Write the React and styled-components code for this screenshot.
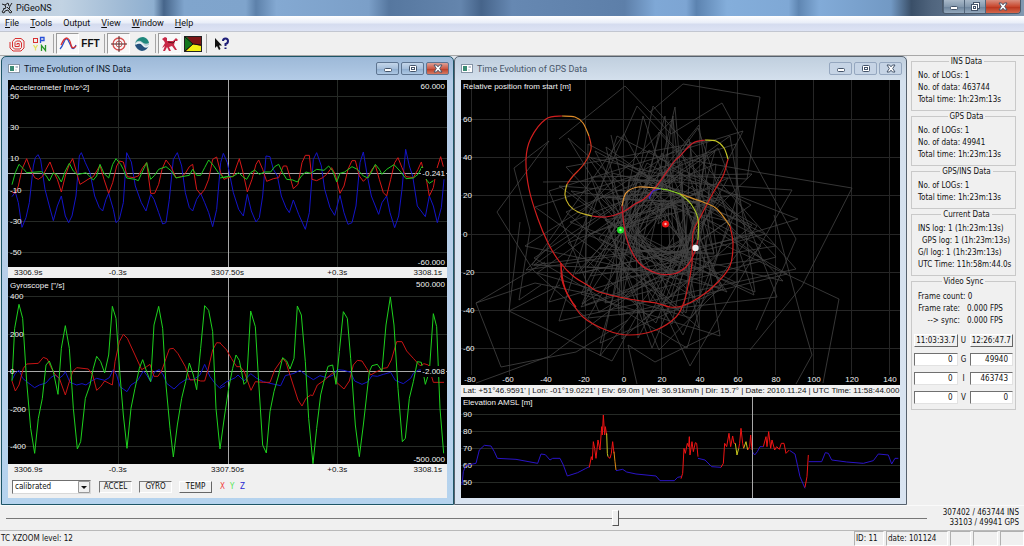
import React from "react";
import styled, { createGlobalStyle } from "styled-components";

const GlobalStyle = createGlobalStyle`
  * {
    box-sizing: border-box;
  }

  body {
    margin: 0;
    background: #f0f0f0;
    color: #111;
    font: 8px/12px "DejaVu Sans Condensed", "DejaVu Sans", sans-serif;
  }

  button, input, select {
    font: inherit;
    color: inherit;
    margin: 0;
  }
`;

const uiFont = `Roboto, "Open Sans", sans-serif`;

const Page = styled.div`
  display: flex;
  flex-direction: column;
  min-height: 100vh;
`;

const TitleBar = styled.header`
  display: flex;
  align-items: center;
  height: 16px;
  padding-left: 1px;
  font: 9px/16px ${uiFont};
  background: linear-gradient(
    90deg,
    #bccbd9 0%,
    #c2d3e3 6%,
    #9fbad5 12%,
    #8eafd0 15%,
    #46658a 16%,
    #80a5cd 18%,
    #7fa4cc 24%,
    #5d81aa 25%,
    #84a9d2 27%,
    #7b9fc8 36%,
    #56779f 38%,
    #6485ad 45%,
    #46648a 47%,
    #6688b2 50%,
    #5d7fa9 61%,
    #7fa8d6 64%,
    #7da5d3 67%,
    #5c83b0 68%,
    #84aedb 71%,
    #7fa8d5 77%,
    #5f86b2 78%,
    #82abd8 80%,
    #7299c4 87%,
    #3a4f68 89%,
    #50657e 91%,
    #8299b1 100%
  );
`;

const AppTitle = styled.h1`
  flex: 1;
  margin: 0 0 0 3px;
  font: inherit;
`;

const CaptionGroup = styled.div`
  display: flex;
  align-self: flex-start;
  margin-right: 3px;
  border: 1px solid #4b5a6b;
  border-top: 0;
  border-radius: 0 0 4px 4px;
  overflow: hidden;
`;

const CaptionButton = styled.button`
  display: flex;
  align-items: center;
  justify-content: center;
  width: ${({ $close }) => ($close ? 35 : 21)}px;
  height: 13px;
  padding: 0;
  border: 0;
  border-left: 1px solid #52657a;
  background: ${({ $close }) =>
    $close
      ? "linear-gradient(#d98f80, #c8482f 50%, #b8331c 52%, #d4674b)"
      : "linear-gradient(#a9b9c9, #8499ae 50%, #6c839b 52%, #93a8bc)"};
`;

const MenuBar = styled.nav`
  display: flex;
  gap: 11px;
  height: 16px;
  padding: 0 5px;
  font: 9px/15px ${uiFont};
  background: linear-gradient(#fff, #e9eef8 45%, #d5dcef 55%, #dde3f4);
  border-bottom: 1px solid #c2c6d0;
`;

const MenuLink = styled.a`
  color: #111;
  text-decoration: none;
`;

const Toolbar = styled.div`
  display: flex;
  align-items: center;
  height: 24px;
  padding: 0 5px;
  border-bottom: 1px solid #a8a8a8;
`;

const ToolButton = styled.button`
  display: flex;
  align-items: center;
  justify-content: center;
  width: 23px;
  height: 21px;
  padding: 0;
  font: bold 10px/16px "Liberation Sans", sans-serif;
  border: 1px solid;
  border-color: ${({ $on }) => ($on ? "#9b9b9b #fff #fff #9b9b9b" : "transparent")};
  background: ${({ $on }) => ($on ? "#f8f8f8" : "none")};
`;

const Separator = styled.span`
  width: 1px;
  height: 19px;
  margin: 0 2px;
  background: #a5a5a5;
`;

const Workspace = styled.main`
  display: flex;
  padding-left: 1px;
  background: #dfe5ec;
`;

const Frame = styled.section`
  flex: 1;
  min-width: 0;
  padding: 0 6px 6px;
  border: 1px solid ${({ $active }) => ($active ? "#1d5566" : "#56616d")};
  border-radius: 5px 5px 0 0;
  background: ${({ $active }) =>
    $active
      ? "linear-gradient(#9db9d8, #b4cce7 24px, #b7cfe9 60%, #b5d3ee)"
      : "linear-gradient(#c0cfde, #d4e0ed 24px, #d9e4f1)"};
`;

const FrameHeader = styled.header`
  display: flex;
  align-items: center;
  gap: 4px;
  height: 23px;
`;

const FrameTitle = styled.h2`
  flex: 1;
  margin: 0;
  font: 9px/16px ${uiFont};
  color: ${({ $active }) => ($active ? "#0c1a2b" : "#48576a")};
`;

const FrameButton = styled.button`
  display: flex;
  align-items: center;
  justify-content: center;
  width: 23px;
  height: 13px;
  margin-right: -2px;
  padding: 0;
  border: 1px solid ${({ $tone }) => ($tone === "idle" ? "#95a7bf" : "#5e7591")};
  border-radius: 2px;
  background: ${({ $tone }) =>
    ({
      idle: "#c6d4e5",
      blue: "linear-gradient(#c4d6ea, #a6bfdb 50%, #8dacce 52%, #aec8e4)",
      red: "linear-gradient(#dda096, #cc5a46 50%, #b93a24 52%, #d57a64)",
    })[$tone]};
`;

const FrameBody = styled.div`
  background: #f0f0f0;
`;

const Plot = styled.svg`
  display: block;
  width: 100%;
  background: #000;
  font: 8px "Liberation Sans", sans-serif;
  fill: #f2f2f2;

  polyline,
  path {
    fill: none;
  }
`;

const TimeAxis = styled.div`
  display: grid;
  grid-template-columns: 1fr 2fr 2fr 2fr 1fr;
  height: 11px;
  padding: 0;
  font: 8px/11px "Liberation Sans", sans-serif;
  text-align: center;
  white-space: nowrap;

  span:first-child {
    padding-left: 6px;
    text-align: left;
  }

  span:last-child {
    padding-right: 5px;
    justify-self: end;
  }
`;

const FixInfo = styled.div`
  height: 12px;
  padding: 0 2px;
  font: 8px/12px "Liberation Sans", sans-serif;
  white-space: nowrap;
`;

const Controls = styled.div`
  display: flex;
  align-items: center;
  height: 23px;
  gap: 7px;
  padding-left: 4px;
`;

const SelectBox = styled.label`
  position: relative;
  width: 79px;
  margin-right: 1px;
`;

const Select = styled.select`
  display: block;
  appearance: none;
  width: 100%;
  height: 14px;
  padding: 0 2px;
  border: 1px solid;
  border-color: #6f6f6f #d8d8d8 #d8d8d8 #6f6f6f;
  border-radius: 0;
  background: #fff;
  line-height: 12px;
`;

const SelectArrow = styled.svg`
  position: absolute;
  top: 1px;
  right: 1px;
  pointer-events: none;
`;

const PushButton = styled.button`
  height: ${({ $wide }) => ($wide ? 13 : 12)}px;
  width: ${({ $wide }) => ($wide ? "100%" : "33px")};
  padding: 0;
  line-height: 10px;
  background: #f0f0f0;
  border: 1px solid;
  border-color: ${({ $down }) =>
    $down ? "#777 #fff #fff #777" : "#fff #666 #666 #fff"};
`;

const AxisKey = styled.span`
  width: 4px;
  color: ${({ $color }) => $color};
`;

const AxisKeys = styled.div`
  display: flex;
  gap: 6px;
  margin-left: 1px;
`;

const Sidebar = styled.aside`
  flex: 0 0 117px;
  min-width: 0;
  padding: 0 8px 0 4px;
  background: #f0f0f0;
`;

const Group = styled.fieldset`
  min-width: 0;
  margin: 0;
  padding: ${({ $tall }) => ($tall ? "4px 2px 5px" : "3px 0 4px 6px")};
  border: 1px solid #c9c9c9;
  white-space: nowrap;
`;

const Legend = styled.legend`
  margin: 0 auto;
  padding: 0 2px;
  line-height: 11px;
`;

const Line = styled.div`
  padding-left: ${({ $indent }) => $indent || 0}px;
`;

const FrameStats = styled.dl`
  display: grid;
  grid-template-columns: 42px 1fr;
  column-gap: 7px;
  margin: 0 0 7px 4px;

  dt {
    text-align: right;
  }

  dd {
    margin: 0;
  }
`;

const SyncGrid = styled.div`
  display: grid;
  grid-template-columns: 1fr 12px 1fr;
  row-gap: 6px;
  align-items: center;
  text-align: center;
`;

const SyncInput = styled.input`
  width: 100%;
  height: 13px;
  padding: 0 4px;
  text-align: right;
  background: #fff;
  border: 1px solid;
  border-color: #707070 #e2e2e2 #e2e2e2 #707070;
`;

const SliderRow = styled.div`
  display: flex;
  align-items: center;
  gap: 8px;
  height: 26px;
  padding: 0 5px 0 6px;
  border-top: 1px solid #fafafa;
  border-bottom: 1px solid #b9b9b9;
`;

const Slider = styled.input`
  flex: 1;
  min-width: 0;
  height: 18px;
  appearance: none;
  background: linear-gradient(#777, #777) center / 100% 1px no-repeat;

  &::-webkit-slider-thumb {
    appearance: none;
    width: 7px;
    height: 16px;
    background: #f0f0f0;
    border: 1px solid;
    border-color: #fff #555 #555 #fff;
  }
`;

const Counter = styled.div`
  width: 84px;
  line-height: 10px;
  text-align: right;
  white-space: nowrap;
`;

const StatusBar = styled.footer`
  display: flex;
  gap: 2px;
  height: 15px;
  padding-left: 1px;
  line-height: 16px;
`;

const StatusText = styled.span`
  flex: 1;
`;

const StatusCell = styled.span`
  width: ${({ $width }) => $width}px;
  padding-left: 1px;
  border: 1px solid;
  border-color: #b0b0b0 #fff #fff #b0b0b0;
  line-height: 14px;
`;

// Sensor traces, sampled at a third of a plot unit. Each one comes in two
// halves, before and after the cursor.
const ACCEL = [
  {
    color: "#1414c8",
    before:
      "36,422 46,408 55,440 66,514 78,485 88,440 100,330 106,305 114,296 122,312 135,400 148,450 160,494 172,450 184,420 196,480 206,500 216,480 228,420 238,300 244,290 256,320 270,350 284,420 298,455 308,465 318,430 326,412 340,460 348,500 358,490 370,440 380,290 394,318 406,390 424,440 438,465 452,415 462,430 476,470 488,504 498,500 508,430 520,310 532,290 545,330 556,410 568,455 578,465 590,430 602,412 614,440 626,470 638,512 650,460 662,320 670,292",
    after:
      "10,292 22,320 30,360 40,410 56,460 70,480 82,415 94,465 108,498 118,485 128,420 138,300 150,302 160,340 172,360 184,420 198,455 208,470 220,432 236,475 256,520 268,470 280,310 290,290 304,330 314,400 330,455 344,478 360,418 372,470 384,505 396,500 408,450 420,320 430,288 442,360 454,420 476,475 486,440 500,420 510,470 524,515 536,480 546,400 557,280 568,330 578,360 592,450 616,482 628,420 640,450 652,500 664,455 672,370",
  },
  {
    color: "#d81818",
    before:
      "36,408 46,412 55,390 66,340 80,308 92,340 104,365 115,370 127,362 138,340 150,318 162,350 172,370 184,408 196,360 208,325 218,308 230,350 240,385 252,378 264,370 280,362 300,328 312,370 326,412 338,380 350,330 358,315 370,318 382,362 400,365 415,360 428,335 440,320 452,412 464,412 476,385 486,340 498,312 512,330 528,365 545,362 556,352 568,332 578,325 590,400 602,415 614,400 626,370 638,310 650,303 662,350 672,370 690,362",
    after:
      "24,366 40,360 50,330 58,308 68,345 82,408 96,370 108,325 116,312 128,340 140,376 160,368 176,365 190,330 200,330 212,370 220,398 234,385 246,320 256,298 268,298 276,370 290,374 308,365 320,355 335,335 346,355 360,412 372,390 384,340 396,314 406,314 418,360 430,376 444,362 456,340 466,328 478,370 490,410 500,420 512,370 524,320 534,305 546,335 558,362 580,365 594,340 604,318 612,350 620,375 628,420 640,395 650,340 662,302 670,332",
  },
  {
    color: "#1ec81e",
    before:
      "36,386 46,350 57,325 70,338 80,350 125,347 138,358 148,375 160,350 172,358 184,378 196,345 208,322 220,345 232,356 258,350 280,372 290,360 300,325 312,352 326,366 338,325 348,308 362,325 370,340 380,366 405,370 415,374 428,345 440,320 452,370 464,358 476,340 498,332 514,345 528,366 545,362 568,358 578,340 590,358 602,358 614,335 626,312 640,328 655,350 670,365 690,360",
    after:
      "0,366 20,362 38,362 56,350 68,362 80,370 92,350 104,342 118,355 134,348 152,348 164,332 176,325 188,350 200,370 218,372 232,378 246,358 258,348 272,352 290,340 312,343 326,330 338,345 350,378 360,352 374,348 396,332 412,340 430,360 444,366 456,345 466,325 478,340 486,355 500,340 522,326 540,345 558,368 580,366 594,355 606,332 620,372 628,382 640,374",
  },
];

const GYRO = [
  {
    color: "#1414c8",
    before:
      "36,315 46,295 57,286 68,310 80,320 104,338 118,330 138,324 152,308 165,300 178,310 190,300 196,290 210,322 230,330 246,326 258,330 274,318 290,310 314,316 328,308 340,284 350,300 360,335 381,350 393,330 412,318 430,288 440,300 452,320 464,290 478,284 490,300 500,325 522,342 540,325 560,312 580,314 600,300 614,268 630,305 645,325 660,340 675,332",
    after:
      "0,335 20,320 46,308 54,300 72,318 92,296 110,310 130,320 150,325 182,332 196,302 222,295 240,286 258,300 280,314 300,302 320,308 340,300 352,284 372,286 392,292 404,318 426,328 444,320 456,302 472,304 490,298 512,292 526,316 550,326 572,310 580,295 596,285 605,285",
  },
  {
    color: "#c81414",
    before:
      "36,318 46,348 57,330 70,280 80,267 115,265 130,247 142,252 152,275 165,298 178,310 196,360 208,320 218,290 230,278 265,282 278,300 290,346 302,335 314,318 337,330 345,260 358,200 370,178 382,190 405,240 425,284 440,275 450,268 462,304 474,304 486,285 498,250 508,222 520,220 534,236 556,275 570,315 590,314 602,318 614,318 624,285 638,225 650,203 662,204",
    after:
      "0,204 20,225 34,250 50,275 60,275 72,288 93,346 106,320 130,322 150,322 164,285 188,250 198,262 210,300 234,375 246,393 258,370 272,360 278,362 292,330 310,318 340,292 350,322 372,342 388,318 400,270 412,256 426,258 440,280 452,300 466,292 490,280 502,278 514,255 530,200 546,200 560,228 580,250 600,272 612,266 625,270 640,322 672,322",
  },
  {
    color: "#1ed21e",
    before:
      "36,318 44,160 57,88 68,130 80,320 92,460 104,535 115,430 127,370 138,270 148,258 160,290 174,358 184,220 196,152 208,220 220,400 232,522 242,500 256,370 270,330 280,280 290,244 302,260 314,294 326,240 337,94 348,130 360,300 370,420 381,520 393,400 405,340 418,280 428,254 440,290 452,320 462,150 476,94 488,160 498,330 510,460 520,546 532,450 545,370 557,320 568,264 580,300 590,344 602,220 614,92 626,106 638,170 648,400 660,522",
    after:
      "0,522 14,420 26,340 38,280 48,240 58,256 72,328 80,320 92,108 106,155 116,320 128,510 139,534 150,410 162,350 176,300 188,248 200,258 210,282 222,250 232,93 244,120 256,260 266,430 279,566 290,460 302,360 314,310 324,274 338,270 348,328 358,230 370,110 382,130 392,250 406,450 418,545 430,450 448,290 456,272 472,268 486,288 498,150 511,66 522,150 534,340 547,500 556,490 568,370 580,320 592,260 604,262 616,328 628,290 640,116 650,155 660,400 671,535",
  },
];

const BLUE = "#2a14c8";
const RED = "#f01414";
const YELLOW = "#c8c81e";

const ELEVATION = [
  [BLUE, "18,615 22,575 30,556 60,550 70,510 85,496 105,498 115,515 124,535 180,538 245,550 255,522 268,524 282,540 290,535 312,535 322,555 334,588 365,578 388,566 400,560"],
  [RED, "400,562 406,530 409,540 412,485 416,505 420,535 426,480 432,510 437,440 439,465 442,405 446,465 448,440 452,465"],
  [YELLOW, "452,460 454,520 456,530"],
  [RED, "456,530 462,535 466,520 470,485 474,520"],
  ["#e08c14", "474,515 477,545 480,570"],
  [BLUE, "480,572 500,568 512,576 540,582 600,588 612,602 655,602 665,592 675,590"],
  [RED, "675,596 680,580 684,505 688,520 694,490 698,500 700,470 702,525 708,485 712,515 718,488 722,490 726,530"],
  [BLUE, "726,535 747,540 767,560 795,562"],
  [RED, "795,562 802,550 806,490 812,500 819,460 824,500 830,468 834,490 838,490"],
  [YELLOW, "838,490 843,525 848,505"],
  [RED, "848,505 851,490 855,445 860,490 863,505"],
  [YELLOW, "863,505 870,485 875,510"],
  [RED, "875,510 881,500 884,465 888,510"],
  [BLUE, "889,515 896,525 904,515 912,500 922,500"],
  [RED, "922,500 930,470 933,500 938,455 944,505 948,480 956,510 962,500 970,508 976,490 984,490 990,520 1000,510"],
  [BLUE, "1002,512 1017,522 1032,590 1047,625"],
  [RED, "1047,622 1053,590 1057,525"],
  [BLUE, "1058,545 1097,545 1108,518 1117,520 1127,540 1172,546 1222,550 1252,542 1267,522 1297,525 1307,552 1317,535 1327,535"],
];

const TRACKS = [
  ["#d21e1e", [[562, 116], [546, 119], [531, 138], [526, 159], [529, 189], [538, 219], [548, 243], [559, 261], [573, 276], [589, 286], [599, 292], [629, 299], [656, 303], [670, 307], [682, 306], [700, 297], [717, 283], [730, 266], [733, 244], [730, 226]]],
  ["#e08c28", [[562, 116], [575, 117], [583, 123], [589, 136]]],
  ["#d2321e", [[589, 136], [591, 149], [584, 164], [573, 176], [567, 184]]],
  ["#c8b428", [[567, 184], [565, 195], [569, 205], [578, 212], [592, 216]]],
  ["#c81e28", [[592, 216], [606, 217], [623, 212], [635, 204], [644, 199], [656, 187], [673, 163], [680, 156], [693, 143], [705, 140]]],
  ["#c8c828", [[705, 140], [716, 141], [724, 148], [728, 159]]],
  ["#c81e1e", [[728, 159], [723, 176], [713, 193], [700, 218], [693, 233], [692, 263], [688, 286], [684, 302], [676, 317], [656, 330], [629, 335], [606, 330], [583, 317], [569, 297], [562, 280], [561, 263]]],
  ["#d28c28", [[730, 226], [717, 209], [703, 202], [680, 194]]],
  ["#8cd228", [[680, 194], [668, 190], [656, 188]]],
  ["#3c28c8", [[661, 189], [653, 191], [649, 199]]],
  ["#e0963c", [[656, 188], [638, 187], [626, 193], [622, 206]]],
  ["#c81e28", [[622, 206], [624, 225], [628, 243], [639, 263], [656, 273], [673, 274], [686, 267], [694, 254], [698, 240]]],
  ["#aac828", [[698, 240], [698, 219], [691, 204], [680, 194]]],
];

const OUTLIERS = [
  "559,139 625,86 671,134 722,103 796,239 756,330",
  "650,112 683,84 760,97 747,179 690,176",
  "549,141 514,168 530,230 519,300 541,285",
  "549,141 497,212 533,270 600,330",
  "690,160 762,173 852,188 802,286 750,350",
  "720,243 839,299 823,383",
  "545,262 476,303 501,367 576,352 628,320",
  "560,285 509,311 612,361 640,310",
  "476,383 550,356 650,280",
  "520,222 509,311",
  "774,215 802,321 812,355 796,384",
  "476,303 535,283 600,296",
  "543,182 673,180 673,116 660,200",
  "637,384 628,345 655,362 720,330",
  "648,196 656,206 652,214 662,208 666,218 658,224 664,200 654,203",
];

// Raw headings scatter around the start position; a fixed seed keeps the
// drawing stable between renders.
const scatter = () => {
  let seed = 17;
  const random = () => {
    seed = (seed * 16807) % 2147483647;
    return seed / 2147483647;
  };
  let angle = 0;
  const points = [];
  for (let i = 0; i < 190; i += 1) {
    angle += 1.3 + random() * 1.4;
    const radius = 20 + random() * 115;
    const x = 660 + Math.cos(angle) * radius * 1.05;
    const y = 234 + Math.sin(angle) * radius;
    points.push(`${Math.round(x)},${Math.round(y)}`);
  }
  return points.join(" ");
};

const smooth = (pts) => {
  let d = `M${pts[0]}`;
  for (let i = 0; i < pts.length - 1; i += 1) {
    const a = pts[Math.max(i - 1, 0)];
    const b = pts[i];
    const c = pts[i + 1];
    const e = pts[Math.min(i + 2, pts.length - 1)];
    d += `C${b[0] + (c[0] - a[0]) / 6},${b[1] + (c[1] - a[1]) / 6} ${
      c[0] - (e[0] - b[0]) / 6
    },${c[1] - (e[1] - b[1]) / 6} ${c[0]},${c[1]}`;
  }
  return d;
};

const Glyph = ({ kind, color = "#fff", edge = "#44546a" }) => (
  <svg width="12" height="10" viewBox="0 0 12 10" fill={color} stroke={edge}>
    {kind === "min" && <rect x="2.5" y="4.5" width="7" height="3" rx="1" />}
    {kind === "max" && (
      <>
        <rect x="2.5" y="1.5" width="7" height="6" rx="1" />
        <rect x="4.5" y="3.5" width="3" height="2" />
      </>
    )}
    {kind === "restore" && (
      <>
        <rect x="4.5" y="0.5" width="6" height="6" />
        <rect x="2.5" y="2.5" width="6" height="6" />
        <rect x="4.5" y="4.5" width="2" height="2" />
      </>
    )}
    {kind === "close" && (
      <path d="M2 1h2.500L6 2.800 7.500 1H10L7.700 4.500 10 8H7.500L6 6.200 4.500 8H2l2.300-3.500z" />
    )}
  </svg>
);

const DocIcon = () => (
  <svg width="12" height="10" viewBox="0 0 12 10">
    <rect x="0.5" y="0.5" width="11" height="8" fill="#fff" stroke="#8494a6" />
    <rect x="2" y="2" width="4" height="5" fill="#3b8c74" />
    <path d="M7.500 3h2.500M7.500 6h1" stroke="#7288a0" />
  </svg>
);

const Window = ({ title, active, children }) => (
  <Frame $active={active}>
    <FrameHeader>
      <DocIcon />
      <FrameTitle $active={active}>{title}</FrameTitle>
      {["min", "max", "close"].map((kind) => (
        <FrameButton
          key={kind}
          aria-label={kind}
          $tone={!active ? "idle" : kind === "close" ? "red" : "blue"}
        >
          <Glyph kind={kind} />
        </FrameButton>
      ))}
    </FrameHeader>
    <FrameBody>{children}</FrameBody>
  </Frame>
);

const SensorPlot = ({ box, title, rows, top, bottom, value, zero, traces, dy }) => {
  const [x, y, w, h] = box;
  return (
    <Plot viewBox={box.join(" ")}>
      <g stroke="#262a26">
        {rows.map(([label, at]) => (
          <path key={label} d={`M${x} ${at + 0.5}h${w}`} />
        ))}
        <path d={`M118.500 ${y}v${h}M337.500 ${y}v${h}`} />
      </g>
      <path d={`M228.500 ${y}v${h}M${x} ${zero + 0.5}h${w}`} stroke="#a8a8a8" />
      {["before", "after"].map((part, i) => (
        <g
          key={part}
          transform={`translate(${i * 220} ${dy}) scale(0.33333)`}
          strokeWidth="3"
        >
          {traces.map((t) => (
            <polyline key={t.color} points={t[part]} stroke={t.color} />
          ))}
        </g>
      ))}
      <rect x="421" y={zero - 5} width="25" height="11" fill="#000" />
      <text x="10" y={y + 10}>{title}</text>
      {rows.map(([label, at]) => (
        <text key={label} x="10" y={at + 3}>{label}</text>
      ))}
      <g textAnchor="end">
        <text x="445" y={y + 9}>{top}</text>
        <text x="445" y={zero + 3}>{value}</text>
        <text x="445" y={y + h - 2}>{bottom}</text>
      </g>
    </Plot>
  );
};

const TimeLabels = () => (
  <TimeAxis>
    <span>3306.9s</span>
    <span>-0.3s</span>
    <span>3307.50s</span>
    <span>+0.3s</span>
    <span>3308.1s</span>
  </TimeAxis>
);

const PositionPlot = () => {
  const xs = [-80, -60, -40, -20, 0, 20, 40, 60, 80, 100, 120, 140];
  const ys = [60, 40, 20, 0, -20, -40, -60];
  return (
    <Plot viewBox="461 80 439 305">
      <g stroke="#262626">
        {xs.map((v, i) => (
          <path key={v} d={`M${471.5 + i * 38} 80v295`} />
        ))}
        {ys.map((v, i) => (
          <path key={v} d={`M461 ${Math.round(119 + i * 38.2) + 0.5}h439`} />
        ))}
      </g>
      <g stroke="#444" strokeWidth="0.800">
        <polyline points={scatter()} />
        {OUTLIERS.map((points) => (
          <polyline key={points} points={points} />
        ))}
      </g>
      {TRACKS.map(([color, points]) => (
        <path key={String(points)} d={smooth(points)} stroke={color} strokeWidth="1.200" />
      ))}
      <path d="M561 263C562 285 566 295 576 307" stroke="#d21e1e" strokeWidth="1.200" />
      <circle cx="620.5" cy="230" r="3.500" fill="#1edc28" />
      <circle cx="620.5" cy="230" r="1.200" fill="#b4ffb4" />
      <circle cx="665.5" cy="224" r="3.500" fill="#f01414" />
      <circle cx="665.5" cy="224" r="1.200" fill="#ffb4b4" />
      <circle cx="695.5" cy="248" r="3.200" />
      <text x="463" y="89">Relative position from start [m]</text>
      {ys.map((v, i) => (
        <text key={v} x="463" y={Math.round(119 + i * 38.2) + 3}>{v}</text>
      ))}
      <g textAnchor="middle">
        {xs.map((v, i) => (
          <text key={v} x={(v < 0 ? 470 : 472) + i * 38} y="382">{v}</text>
        ))}
      </g>
    </Plot>
  );
};

const ElevationPlot = () => (
  <Plot viewBox="461 397 439 101">
    {[90, 80, 70, 60, 50].map((v, i) => (
      <g key={v}>
        <path d={`M461 ${414.5 + i * 17}h439`} stroke="#262a26" />
        <text x="463" y={417 + i * 17}>{v}</text>
      </g>
    ))}
    <g transform="translate(456 280) scale(0.33333)" strokeWidth="3">
      {ELEVATION.map(([color, points]) => (
        <polyline key={points} points={points} stroke={color} />
      ))}
    </g>
    <path d="M752.5 397v101" stroke="#a8a8a8" />
    <text x="463" y="405">Elevation AMSL [m]</text>
  </Plot>
);

const ToolIcon = ({ children, label, on }) => (
  <ToolButton aria-label={label} $on={on}>
    <svg width="18" height="16" viewBox="0 0 18 16" fill="none">
      {children}
    </svg>
  </ToolButton>
);

const SyncRow = ({ name, left, right }) => (
  <>
    <SyncInput aria-label={`${name} start`} defaultValue={left} />
    <span>{name}</span>
    <SyncInput aria-label={`${name} end`} defaultValue={right} />
  </>
);

export default function App() {
  return (
    <Page>
      <GlobalStyle />
      <TitleBar>
        <svg width="12" height="12" viewBox="0 0 12 12" fill="none" stroke="#222">
          <path d="M1 2l3 1 1 3-3 1M4 3l3-2 1 3M11 1L9 4l-1 3 3 3-2 1-2-3-3 1-1 2-2-1 2-3M6 5l2 2" />
        </svg>
        <AppTitle>PiGeoNS</AppTitle>
        <CaptionGroup>
          <CaptionButton aria-label="Minimize"><Glyph kind="min" /></CaptionButton>
          <CaptionButton aria-label="Restore"><Glyph kind="restore" /></CaptionButton>
          <CaptionButton aria-label="Close" $close><Glyph kind="close" /></CaptionButton>
        </CaptionGroup>
      </TitleBar>
      <MenuBar>
        {["File", "Tools", "Output", "View", "Window", "Help"].map((name) => (
          <MenuLink key={name} href="#">
            {name === "Output" ? name : <><u>{name[0]}</u>{name.slice(1)}</>}
          </MenuLink>
        ))}
      </MenuBar>
      <Toolbar>
        <ToolIcon label="Spiral">
          <path
            d="M9 9V7.500h2.200v3H7V6.500L8.500 5H12l1.500 2v4.500L12 13H6.500L4.500 11V5.500L7 2.500h6l3 2.500v7l-3 3H5L2 12V6"
            stroke="#d83030"
          />
        </ToolIcon>
        <ToolIcon label="Position">
          <rect x="2.500" y="2.500" width="4" height="4" stroke="#d83030" />
          <path d="M9.500 7V1.500h3.500v3h-3" stroke="#2850d8" strokeWidth="1.300" />
          <path d="M2.500 9l2 3 2-3M4.500 12v2.500" stroke="#e4e060" strokeWidth="1.300" />
          <path d="M10.500 15V9.500l4 5V9" stroke="#289628" strokeWidth="1.300" />
        </ToolIcon>
        <Separator />
        <ToolIcon label="Signals" on>
          <path d="M1 13Q3 11 5 6t4-2l4 8q2 2 4-3" stroke="#2850c8" strokeWidth="1.300" />
          <path d="M2 9Q5 2 8 2q3 1 4 7 1 5 5 1" stroke="#d83030" strokeWidth="1.300" />
        </ToolIcon>
        <ToolButton>FFT</ToolButton>
        <Separator />
        <ToolIcon label="Target" on>
          <circle cx="9" cy="8" r="6" stroke="#d85050" strokeWidth="1.300" />
          <circle cx="9" cy="8" r="3" stroke="#d06060" />
          <path d="M9 0v16M1 8h16" stroke="#502828" />
        </ToolIcon>
        <ToolIcon label="Globe">
          <circle cx="9" cy="8" r="7" fill="#b8d0d8" />
          <path d="M2 7q3-6 8-6 5 1 6 6-4 2-7-1T2 7z" fill="#20887c" />
          <path d="M2 9q4-3 8 0t6-1q-1 6-7 7-5-1-7-6z" fill="#24507c" />
          <path d="M3 8q4-3 7 1t6 0" stroke="#eef6f6" strokeWidth="1.500" />
        </ToolIcon>
        <Separator />
        <ToolIcon label="Horse" on>
          <path
            d="M1 3l3-2 2 1v3h6l3-3 2 2-1 1-2 0-1 4 3 5h-2l-3-4-3 1 2 4H8L6 11l-2 4H2l2-5-3 2 3-5-1-2z"
            fill="#c82846"
          />
          <path d="M7 6l5 1 2-2" stroke="#601018" />
        </ToolIcon>
        <ToolIcon label="Map">
          <rect x="0.500" y="0.500" width="17" height="15" fill="#7c1414" stroke="#222" />
          <path d="M1 1h2l6 7-8 7z" fill="#14781e" />
          <path d="M9 8l8 2v5H2z" fill="#f4f014" />
          <path d="M1 1l8 7 8 1M9 8l-8 7" stroke="#111" />
        </ToolIcon>
        <Separator />
        <ToolIcon label="Context help">
          <path d="M3 2v10l2-2 2 4 1.500-1L7 9.500h3z" fill="#111" />
          <path d="M11 5q0-2.500 2.500-2.500T16 5t-2.500 3v2M13.500 11.500v1.500" stroke="#1e1e78" strokeWidth="2" />
        </ToolIcon>
      </Toolbar>
      <Workspace>
        <Window title="Time Evolution of INS Data" active>
          <SensorPlot
            box={[8, 80, 439, 187]}
            title="Accelerometer [m/s^2]"
            rows={[["50", 96], ["30", 127], ["10", 158], ["-10", 190], ["-30", 221], ["-50", 252]]}
            top="60.000"
            bottom="-60.000"
            value="-0.241"
            zero={173}
            traces={ACCEL}
            dy={56}
          />
          <TimeLabels />
          <SensorPlot
            box={[8, 278, 439, 186]}
            title={'Gyroscope ["/s]'}
            rows={[["400", 296], ["200", 334], ["0", 371], ["-200", 409], ["-400", 446]]}
            top="500.000"
            bottom="-500.000"
            value="-2.008"
            zero={371}
            traces={GYRO}
            dy={275}
          />
          <TimeLabels />
          <Controls>
            <SelectBox aria-label="Data source">
              <Select defaultValue="calibrated">
                <option>calibrated</option>
              </Select>
              <SelectArrow width="12" height="12">
                <path d="M0.500 11.500V0.500h11v11z" fill="#f0f0f0" stroke="#999" />
                <path d="M3 5h6L6 8z" fill="#111" />
              </SelectArrow>
            </SelectBox>
            <PushButton $down>ACCEL</PushButton>
            <PushButton $down>GYRO</PushButton>
            <PushButton>TEMP</PushButton>
            <AxisKeys>
              <AxisKey $color="#f03c3c">X</AxisKey>
              <AxisKey $color="#50e650">Y</AxisKey>
              <AxisKey $color="#2828d2">Z</AxisKey>
            </AxisKeys>
          </Controls>
        </Window>
        <Window title="Time Evolution of GPS Data">
          <PositionPlot />
          <FixInfo>
            Lat: +51°46.9591' | Lon: -01°19.0221' | Elv: 69.0m | Vel: 36.91km/h |
            Dir: 15.7° | Date: 2010.11.24 | UTC Time: 11:58:44.000
          </FixInfo>
          <ElevationPlot />
        </Window>
        <Sidebar>
          <Group>
            <Legend>INS Data</Legend>
            <Line>No. of LOGs: 1</Line>
            <Line>No. of data: 463744</Line>
            <Line>Total time: 1h:23m:13s</Line>
          </Group>
          <Group>
            <Legend>GPS Data</Legend>
            <Line>No. of LOGs: 1</Line>
            <Line>No. of data: 49941</Line>
            <Line>Total time: 1h:23m:13s</Line>
          </Group>
          <Group>
            <Legend>GPS/INS Data</Legend>
            <Line>No. of LOGs: 1</Line>
            <Line>Total time: 1h:23m:13s</Line>
          </Group>
          <Group>
            <Legend>Current Data</Legend>
            <Line>INS log: 1 (1h:23m:13s)</Line>
            <Line $indent={4}>GPS log: 1 (1h:23m:13s)</Line>
            <Line>G/I log: 1 (1h:23m:13s)</Line>
            <Line>UTC Time: 11h:58m:44.0s</Line>
          </Group>
          <Group $tall>
            <Legend>Video Sync</Legend>
            <Line $indent={4}>Frame count: 0</Line>
            <FrameStats>
              <dt>Frame rate:</dt>
              <dd>0.000 FPS</dd>
              <dt>--&gt; sync:</dt>
              <dd>0.000 FPS</dd>
            </FrameStats>
            <SyncGrid>
              <PushButton $wide>11:03:33.7</PushButton>
              <span>U</span>
              <PushButton $wide>12:26:47.7</PushButton>
              <SyncRow name="G" left="0" right="49940" />
              <SyncRow name="I" left="0" right="463743" />
              <SyncRow name="V" left="0" right="0" />
            </SyncGrid>
          </Group>
        </Sidebar>
      </Workspace>
      <SliderRow>
        <Slider
          type="range"
          aria-label="Sample"
          min="0"
          max="463744"
          defaultValue="307402"
        />
        <Counter>
          307402 / 463744 INS
          <br />
          33103 / 49941 GPS
        </Counter>
      </SliderRow>
      <StatusBar>
        <StatusText>TC XZOOM level: 12</StatusText>
        <StatusCell $width={30}>ID: 11</StatusCell>
        <StatusCell $width={62}>date: 101124</StatusCell>
        <StatusCell $width={21} />
        <StatusCell $width={25} />
        <StatusCell $width={24} />
      </StatusBar>
    </Page>
  );
}
